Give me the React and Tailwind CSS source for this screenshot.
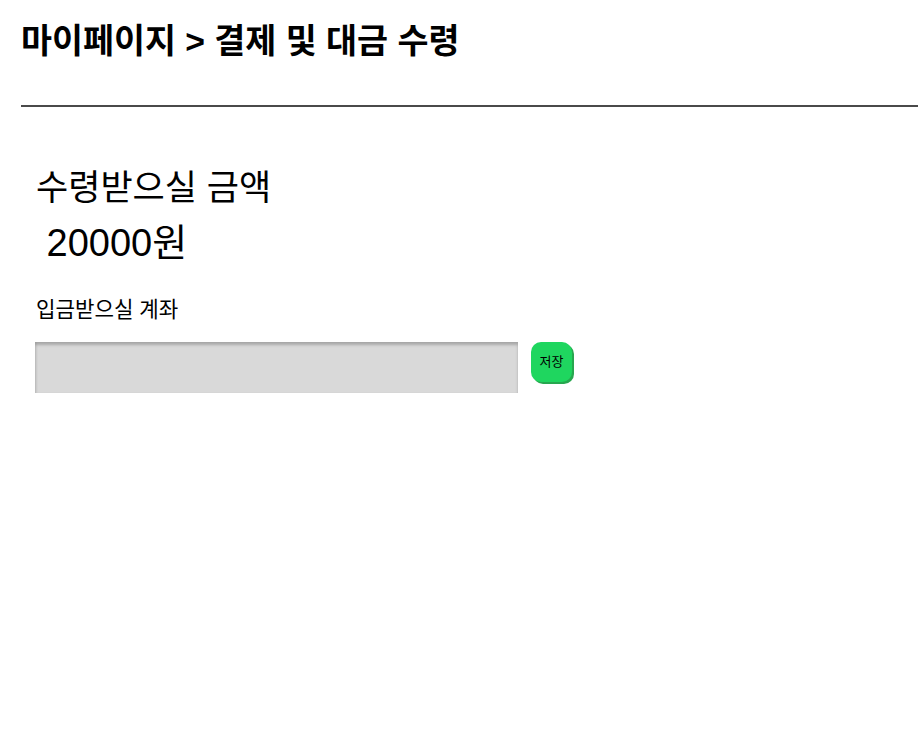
import React from 'react';

export default function App() {
    return (
        <div className="w-[918px] h-[732px] bg-white text-black" style={{ fontFamily: '"Liberation Sans", "Noto Sans CJK KR", sans-serif' }}>
            <div className="pl-[21px] pt-[16px]">
                <h1 className="text-[33.7px] font-bold leading-[50px]">마이페이지 &gt; 결제 및 대금 수령</h1>
            </div>
            <div className="ml-[21px] mt-[39px] h-[2px] bg-[#4a4a4a]" />
            <div className="pl-[36px] pt-[55px]">
                <div className="text-[35px] leading-[51px]">수령받으실 금액</div>
                <div className="text-[38px] leading-[50px] mt-[5px]">&nbsp;20000원</div>
                <div className="text-[21.2px] leading-[30px] mt-[27px]">입금받으실 계좌</div>
                <div className="flex items-start gap-[13px] mt-[17px] -ml-px">
                    <input className="w-[483px] h-[51px] bg-[#d9d9d9] shadow-[inset_0_3px_3px_rgba(0,0,0,0.22),inset_2px_0_2px_rgba(0,0,0,0.05)] outline-none" />
                    <button className="w-[41px] h-[40px] rounded-[10px] bg-[#1fd65f] shadow-[2px_2px_0_#27a74f] text-[13px]">저장</button>
                </div>
            </div>
        </div>
    );
}
